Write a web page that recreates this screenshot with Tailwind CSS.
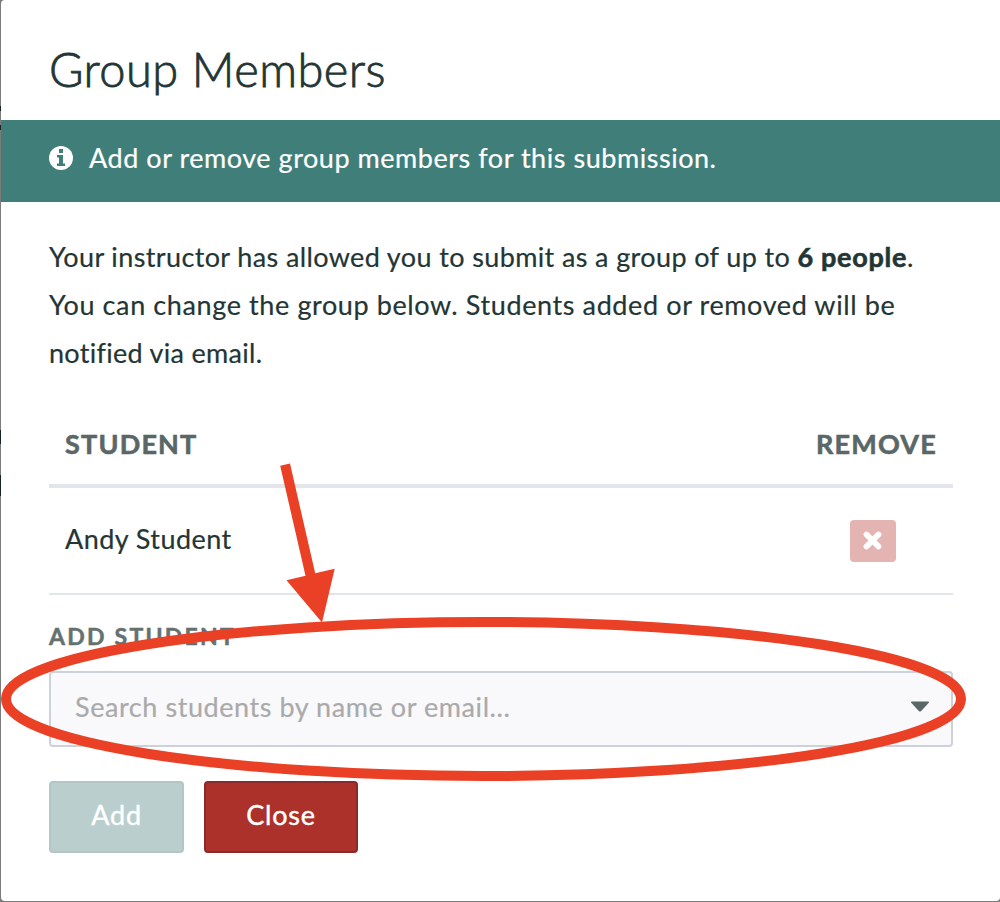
<!DOCTYPE html>
<html lang="en">
<head>
<meta charset="utf-8">
<title>Group Members</title>
<script src="https://cdn.jsdelivr.net/npm/@tailwindcss/browser@4"></script>
</head>
<body class="bg-[#7b7b7b] font-['Lato','Open_Sans',sans-serif] text-[#233534] [-webkit-text-stroke:0.2px]">
<div class="relative h-[902px] w-[1000px] overflow-hidden pb-px pl-px">
  <main class="flex h-[901px] flex-col rounded-l-[4px] rounded-br-[4px] bg-white">
    <header class="flex h-[120px] items-end pb-[21px] pl-12">
      <h1 class="whitespace-nowrap text-[47px] leading-[60px] font-light tracking-[0.45px] [-webkit-text-stroke:0.8px]">Group Members</h1>
    </header>
    <div class="flex h-[82px] items-start bg-[#3f7e79] pt-[19px] pl-12 text-white">
      <svg class="mt-[7px] mr-4 size-6 shrink-0" viewBox="0 0 24 24"><circle cx="12" cy="12" r="12" fill="#fff"/><path fill="#3f7e79" d="M10 3h4v4h-4zM8 9h6v8.500h2V20H8v-2.500h2V11.500H8z"/></svg>
      <p class="-mt-px whitespace-nowrap text-[27px] leading-10 tracking-[0.54px]">Add or remove group members for this submission.</p>
    </div>
    <section class="flex flex-col pt-[31px] pr-[47px] pl-12">
      <div class="text-[27px] leading-[48px] whitespace-nowrap">
        <p class="tracking-[0.38px]">Your instructor has allowed you to submit as a group of up to <b class="tracking-[0.7px] [-webkit-text-stroke:0.6px]">6 people</b>.</p>
        <p class="tracking-[0.61px]">You can change the group below. Students added or removed will be</p>
        <p class="tracking-[0.3px]">notified via email.</p>
      </div>
      <div class="mt-[27px] flex h-[84px] items-center justify-between border-b-4 border-[#e2e5ea] px-4 text-[27px] font-bold text-[#5a6767] [-webkit-text-stroke:0.6px]">
        <span class="tracking-[1.2px]">STUDENT</span><span class="tracking-[1.2px]">REMOVE</span>
      </div>
      <div class="flex h-[107px] items-center justify-between border-b-2 border-[#e2e5ea] pr-[57px] pl-4 text-[27px]">
        <span class="pb-0.5 tracking-[0.45px]">Andy Student</span>
        <button class="flex h-[42px] w-[46px] items-center justify-center rounded-[4px] bg-[#e3b4b2] pr-px" aria-label="Remove Andy Student">
          <svg class="h-[19px] w-[19px]" viewBox="0 0 19 19"><path d="M3.500 3.500l12 12M15.500 3.500l-12 12" stroke="#fff" stroke-width="5.800" stroke-linecap="round"/></svg>
        </button>
      </div>
      <label class="mt-[25px] block h-8 text-[23px] leading-8 font-bold tracking-[2.250px] text-[#64716f] [-webkit-text-stroke:0.5px]">ADD STUDENT</label>
      <div class="mt-[19px] flex h-[76px] items-center justify-between rounded-[4px] border-2 border-[#cdd2da] bg-[#f9f9fc] pr-[22px] pb-[3px] pl-6 text-[27px] text-[#aaa]">
        <span class="tracking-[0.57px]">Search students by name or email...</span>
        <svg class="-mt-[3px] -mr-px h-[11px] w-5" viewBox="0 0 20 11"><path d="M1.500.500h17q1 .5.300 1.300l-7.600 8.200q-1.200 1-2.400 0L1.200 1.800Q.500 1 1.500.500z" fill="#5a6767"/></svg>
      </div>
      <div class="mt-[34px] flex gap-5 text-[27px] tracking-[0.8px] text-white [-webkit-text-stroke:0.4px]">
        <button class="h-[72px] w-[135px] rounded-[4px] border-2 border-[#b2c6c4] bg-[#bacfcd] pb-[3px]">Add</button>
        <button class="h-[72px] w-[154px] rounded-[4px] border-2 border-[#8b2a2c] bg-[#ad312b] pb-[3px]">Close</button>
      </div>
    </section>
  </main>
  <svg class="pointer-events-none absolute top-0 left-0" width="1000" height="902" viewBox="0 0 1000 902">
    <path d="M0 106h1v5H0zM0 125h1v5H0zM0 430h1v14H0zM0 475h1v21H0z" fill="#182324"/>
    <ellipse cx="483.500" cy="699" rx="477.500" ry="77" fill="none" stroke="#ea4025" stroke-width="10"/>
    <path d="M280.200 465.800l9.800-2.200 25.200 109.700 19.500-4.500L322 622.500l-35.500-42.300 19-4.500z" fill="#ea4025"/>
  </svg>
</div>
</body>
</html>
